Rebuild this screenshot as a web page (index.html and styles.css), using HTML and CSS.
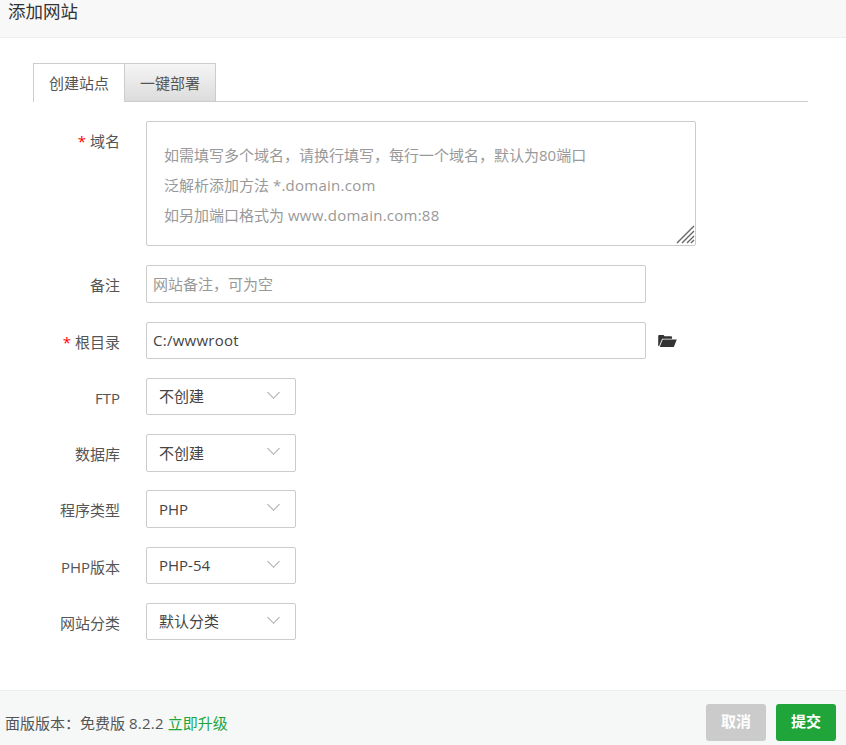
FILE: index.html
```html
<!DOCTYPE html>
<html lang="zh-CN">
<head>
<meta charset="utf-8">
<title>添加网站</title>
<link rel="stylesheet" href="styles.css">
</head>
<body>
<div class="layer">
  <header class="title">添加网站</header>
  <main class="content">
    <div class="tabs">
      <div class="tab active">创建站点</div>
      <div class="tab">一键部署</div>
    </div>
    <form class="form">
      <div class="row row-domain">
        <label class="label"><span class="req">*</span>域名</label>
        <div class="textarea">
          <p>如需填写多个域名，请换行填写，每行一个域名，默认为80端口</p>
          <p>泛解析添加方法 <span class="lat">*.domain.com</span></p>
          <p>如另加端口格式为 <span class="lat">www.domain.com:88</span></p>
          <svg class="grip" width="19" height="19" viewBox="0 0 19 19"><path d="M1 18 18 1M6 18 18 6M11 18l7-7M15 18l3-3" stroke="#666" stroke-width="1.4" fill="none"/></svg>
        </div>
      </div>
      <div class="row row-note">
        <label class="label">备注</label>
        <div class="input placeholder">网站备注，可为空</div>
      </div>
      <div class="row row-path">
        <label class="label"><span class="req">*</span>根目录</label>
        <div class="input short"><span class="lat">C:/wwwroot</span></div>
        <svg class="folder" width="19" height="13" viewBox="0 0 20 14"><path d="M0 13V2.2C0 1.5.5 1 1.2 1h4.6l1 1.4h7c.7 0 1.1.4 1.1 1.1V5H4.2L1 13H0Z" fill="#333"/><path d="M4.8 6H20l-3.2 8H1.6Z" fill="#333"/></svg>
      </div>
      <div class="row row-s1"><label class="label">FTP</label><div class="select">不创建<span class="chev"></span></div></div>
      <div class="row row-s2"><label class="label">数据库</label><div class="select tall">不创建<span class="chev"></span></div></div>
      <div class="row row-s3"><label class="label">程序类型</label><div class="select tall">PHP<span class="chev"></span></div></div>
      <div class="row row-s4"><label class="label">PHP版本</label><div class="select">PHP-54<span class="chev"></span></div></div>
      <div class="row row-s5"><label class="label">网站分类</label><div class="select">默认分类<span class="chev"></span></div></div>
    </form>
  </main>
  <footer class="footer">
    <div class="version">面版版本：免费版 <span class="lat">8.2.2</span> <a class="upgrade">立即升级</a></div>
    <div class="actions">
      <button class="btn cancel" type="button">取消</button>
      <button class="btn submit" type="button">提交</button>
    </div>
  </footer>
</div>
</body>
</html>
```
FILE: styles.css
```css
* { box-sizing: border-box; }
html, body { margin: 0; padding: 0; background: #fff; }
body {
  font-family: "Open Sans", "Noto Sans CJK SC", sans-serif;
  font-size: 15px;
  color: #555;
}
.lat { letter-spacing: .25px; }
.layer { width: 846px; height: 745px; display: flex; flex-direction: column; overflow: hidden; }
.title {
  height: 38px;
  background: #f8f8f8;
  border-bottom: 1px solid #eee;
  padding-left: 8px;
  font-size: 17.5px;
  line-height: 22px;
  color: #333;
}
.content { flex: 1; padding: 25px 38px 0 33px; }
.tabs { display: flex; height: 39px; border-bottom: 1px solid #ccc; }
.tab {
  width: 91px;
  height: 39px;
  border: 1px solid #ccc;
  border-left: 0;
  background: linear-gradient(#f5f5f5, #dcdcdc);
  text-align: center;
  line-height: 39px;
  color: #555;
}
.tab.active {
  width: 92px;
  background: #fff;
  border-left: 1px solid #ccc;
  border-bottom: 0;
  border-right: 1px solid #ccc;
}
.form { display: block; }
.row { display: flex; align-items: flex-start; }
.label {
  width: 87px;
  text-align: right;
  color: #555;
  line-height: 22px;
  margin-right: 26px;
  padding-top: 9px;
  flex: none;
}
.req { color: #f00; margin-right: 4px; }
.textarea {
  position: relative;
  width: 550px;
  height: 125px;
  border: 1px solid #ccc;
  border-radius: 2px;
  padding: 18px 17px 0;
  color: #999;
}
.textarea p { margin: 0; line-height: 30px; height: 30px; }
.grip { position: absolute; right: 0; bottom: 1px; }
.input {
  width: 500px;
  border: 1px solid #ccc;
  border-radius: 2px;
  padding: 0 6px;
  line-height: 36px;
  height: 38px;
  color: #444;
}
.input.short { height: 37px; line-height: 35px; }
.placeholder { color: #999; }
.folder { margin: 12px 0 0 12px; flex: none; }
.select {
  position: relative;
  width: 150px;
  height: 37px;
  border: 1px solid #ccc;
  border-radius: 2px;
  padding-left: 12px;
  line-height: 35px;
  color: #444;
}
.select.tall { height: 38px; line-height: 37px; }
.chev {
  position: absolute;
  right: 17px;
  top: 9px;
  width: 9px;
  height: 9px;
  border-right: 1px solid #aaa;
  border-bottom: 1px solid #aaa;
  transform: rotate(45deg);
}
.row-domain { margin-top: 19px; }
.row-note { margin-top: 19px; }
.row-path { margin-top: 19px; }
.row-s1 { margin-top: 19px; }
.row-s2 { margin-top: 19px; }
.row-s3 { margin-top: 18px; }
.row-s4 { margin-top: 19px; }
.row-s5 { margin-top: 19px; }
.footer {
  height: 55px;
  background: #f6f8f8;
  border-top: 1px solid #eee;
  display: flex;
  justify-content: space-between;
  align-items: center;
  padding: 0 10px 0 5px;
}
.version { color: #555; padding-top: 9px; }
.upgrade { color: #20a53a; }
.actions { display: flex; gap: 10px; padding-top: 8px; }
.btn {
  width: 60px;
  height: 37px;
  border: 0;
  border-radius: 3px;
  color: #fff;
  font: bold 15px/33px "Open Sans", "Noto Sans CJK SC", sans-serif;
  padding: 0 0 2px;
}
.cancel { background: #cbcbcb; }
.submit { background: #20a53a; }
```
